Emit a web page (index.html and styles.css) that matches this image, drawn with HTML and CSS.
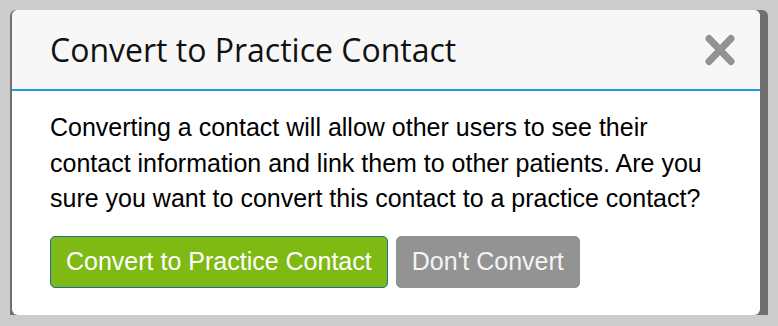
FILE: index.html
```html
<!DOCTYPE html>
<html>
<head>
<title>Convert to Practice Contact</title>
<meta charset="UTF-8">
<link rel="stylesheet" href="styles.css">
</head>
<body>
	<div class="modal-frame">
		<div class="modal">
			<header class="modal-header">
				<h1 class="modal-title">Convert to Practice Contact</h1>
				<button class="modal-close" aria-label="Close">
					<svg width="32" height="34" viewBox="0 0 32 34">
						<path d="M5 5.5 L27 28.5 M27 5.5 L5 28.5" stroke="#929292" stroke-width="7" stroke-linecap="round" fill="none"/>
					</svg>
				</button>
			</header>
			<div class="modal-body">
				<p>Converting a contact will allow other users to see their contact information and link them to other patients. Are you sure you want to convert this contact to a practice contact?</p>
				<div class="actions">
					<button class="btn btn-convert">Convert to Practice Contact</button>
					<button class="btn btn-cancel">Don't Convert</button>
				</div>
			</div>
		</div>
	</div>
</body>
</html>
```

FILE: styles.css
```css
body {
	margin: 0;
	background: #cccccc;
	font-family: "Liberation Sans", Arial, sans-serif;
}

.modal-frame {
	margin: 10px 10px 0;
	padding: 0 8px 0 2px;
	background: #707070;
	border-radius: 6px 6px 0 0;
}

.modal {
	background: #fff;
	border-radius: 6px;
	overflow: hidden;
}

.modal-header {
	display: flex;
	align-items: center;
	justify-content: space-between;
	height: 79px;
	padding: 0 24px 0 38px;
	background: #f7f7f7;
	border-bottom: 2px solid #1a9be2;
}

.modal-title {
	margin: 0;
	font: 400 32px "Open Sans", "Noto Sans", sans-serif;
	color: #111;
}

.modal-close {
	display: flex;
	padding: 0;
	border: 0;
	background: none;
	cursor: pointer;
}

.modal-body {
	padding: 19px 38px 27px;
}

.modal-body p {
	margin: 0;
	font-size: 25px;
	line-height: 1.42857;
	color: #000;
}

.actions {
	display: flex;
	gap: 8px;
	margin-top: 19px;
}

.btn {
	padding: 7px 15px;
	font: 25px/1.42857 "Liberation Sans", Arial, sans-serif;
	color: #fff;
	border: 1px solid transparent;
	border-radius: 5px;
	cursor: pointer;
}

.btn-convert {
	background: #7fb914;
	border-color: #1d6fa3;
}

.btn-cancel {
	background: #939393;
	border-color: #939393;
	color: #f4f4f4;
}
```
